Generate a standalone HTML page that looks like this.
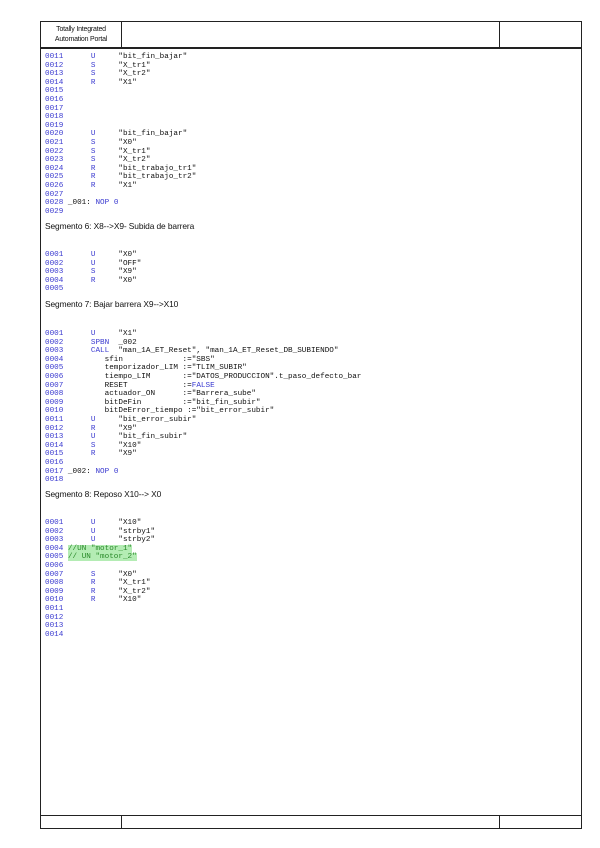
<!DOCTYPE html>
<html><head><meta charset="utf-8"><style>
body{margin:0;width:600px;height:848px;background:#fff;position:relative;overflow:hidden}
.b{position:absolute;border:1px solid #222;box-sizing:border-box}
pre{position:absolute;left:45px;margin:0;font-family:"Liberation Mono",monospace;font-size:7.65px;line-height:8.6px;color:#111;letter-spacing:0}
pre i{font-style:normal;color:#3a3ad0}
pre b{font-weight:normal;color:#3a3ad0}
pre u{text-decoration:none;background:#b4ecb4;color:#2a8a2a}
.seg{position:absolute;left:45px;font-family:"Liberation Sans",sans-serif;font-size:8.4px;color:#111;letter-spacing:-0.1px}
.hd{position:absolute;left:41px;width:80px;text-align:center;font-family:"Liberation Sans",sans-serif;font-size:7px;line-height:9.5px;top:25px;color:#111;letter-spacing:-0.2px}
</style></head><body>
<div class="b" style="left:40px;top:21px;width:542px;height:808px"></div>
<div style="position:absolute;left:40px;top:47px;width:542px;height:2px;background:#222"></div>
<div style="position:absolute;left:121px;top:21px;width:1px;height:27px;background:#222"></div>
<div style="position:absolute;left:499px;top:21px;width:1px;height:27px;background:#222"></div>
<div style="position:absolute;left:40px;top:815px;width:542px;height:1px;background:#222"></div>
<div style="position:absolute;left:121px;top:815px;width:1px;height:14px;background:#222"></div>
<div style="position:absolute;left:499px;top:815px;width:1px;height:14px;background:#222"></div>
<div class="hd">Totally Integrated<br>Automation Portal</div>

<pre style="top:53px"><i>0011</i>      <b>U</b>     "bit_fin_bajar"
<i>0012</i>      <b>S</b>     "X_tr1"
<i>0013</i>      <b>S</b>     "X_tr2"
<i>0014</i>      <b>R</b>     "X1"
<i>0015</i>
<i>0016</i>
<i>0017</i>
<i>0018</i>
<i>0019</i>
<i>0020</i>      <b>U</b>     "bit_fin_bajar"
<i>0021</i>      <b>S</b>     "X0"
<i>0022</i>      <b>S</b>     "X_tr1"
<i>0023</i>      <b>S</b>     "X_tr2"
<i>0024</i>      <b>R</b>     "bit_trabajo_tr1"
<i>0025</i>      <b>R</b>     "bit_trabajo_tr2"
<i>0026</i>      <b>R</b>     "X1"
<i>0027</i>
<i>0028</i> _001: <b>NOP</b> <i>0</i>
<i>0029</i></pre>
<div class="seg" style="top:221px">Segmento 6: X8--&gt;X9- Subida de barrera</div>
<pre style="top:251px"><i>0001</i>      <b>U</b>     "X0"
<i>0002</i>      <b>U</b>     "OFF"
<i>0003</i>      <b>S</b>     "X9"
<i>0004</i>      <b>R</b>     "X0"
<i>0005</i></pre>
<div class="seg" style="top:299px">Segmento 7: Bajar barrera X9--&gt;X10</div>
<pre style="top:330px"><i>0001</i>      <b>U</b>     "X1"
<i>0002</i>      <b>SPBN</b>  _002
<i>0003</i>      <b>CALL</b>  "man_1A_ET_Reset", "man_1A_ET_Reset_DB_SUBIENDO"
<i>0004</i>         sfin             :="SBS"
<i>0005</i>         temporizador_LIM :="TLIM_SUBIR"
<i>0006</i>         tiempo_LIM       :="DATOS_PRODUCCION".t_paso_defecto_bar
<i>0007</i>         RESET            :=<i>FALSE</i>
<i>0008</i>         actuador_ON      :="Barrera_sube"
<i>0009</i>         bitDeFin         :="bit_fin_subir"
<i>0010</i>         bitDeError_tiempo :="bit_error_subir"
<i>0011</i>      <b>U</b>     "bit_error_subir"
<i>0012</i>      <b>R</b>     "X9"
<i>0013</i>      <b>U</b>     "bit_fin_subir"
<i>0014</i>      <b>S</b>     "X10"
<i>0015</i>      <b>R</b>     "X9"
<i>0016</i>
<i>0017</i> _002: <b>NOP</b> <i>0</i>
<i>0018</i></pre>
<div class="seg" style="top:489px">Segmento 8: Reposo X10--&gt; X0</div>
<pre style="top:519px"><i>0001</i>      <b>U</b>     "X10"
<i>0002</i>      <b>U</b>     "strby1"
<i>0003</i>      <b>U</b>     "strby2"
<i>0004</i> <u>//UN "motor_1"</u>
<i>0005</i> <u>// UN "motor_2"</u>
<i>0006</i>
<i>0007</i>      <b>S</b>     "X0"
<i>0008</i>      <b>R</b>     "X_tr1"
<i>0009</i>      <b>R</b>     "X_tr2"
<i>0010</i>      <b>R</b>     "X10"
<i>0011</i>
<i>0012</i>
<i>0013</i>
<i>0014</i></pre>
</body></html>
